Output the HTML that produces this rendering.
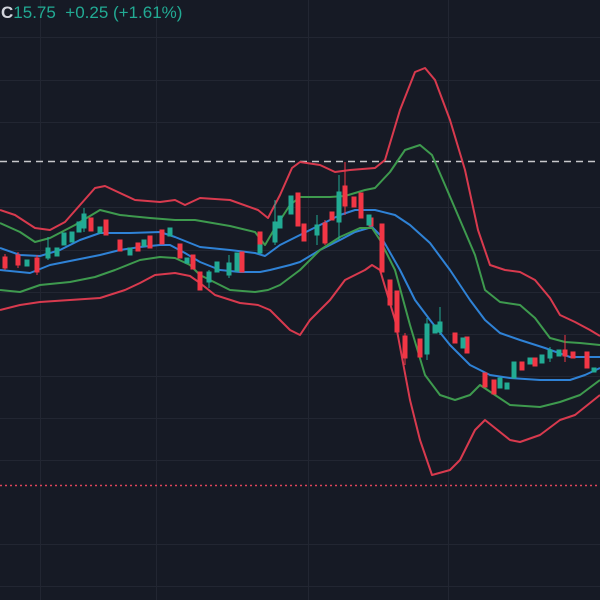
<!DOCTYPE html><html><head><style>html,body{margin:0;padding:0;background:#161a25;width:600px;height:600px;overflow:hidden}
.t{position:absolute;left:1px;top:3px;font:17px "Liberation Sans",sans-serif;color:#22ab94;white-space:pre}
</style></head><body>
<svg width="600" height="600" style="position:absolute;left:0;top:0">
<rect width="600" height="600" fill="#161a25"/>
<g stroke="#222632" stroke-width="1">
<line x1="0" y1="37.5" x2="600" y2="37.5"/><line x1="0" y1="80.5" x2="600" y2="80.5"/><line x1="0" y1="122.5" x2="600" y2="122.5"/><line x1="0" y1="207.5" x2="600" y2="207.5"/><line x1="0" y1="250.5" x2="600" y2="250.5"/><line x1="0" y1="292.5" x2="600" y2="292.5"/><line x1="0" y1="334.5" x2="600" y2="334.5"/><line x1="0" y1="376.5" x2="600" y2="376.5"/><line x1="0" y1="418.5" x2="600" y2="418.5"/><line x1="0" y1="460.5" x2="600" y2="460.5"/><line x1="0" y1="544.5" x2="600" y2="544.5"/><line x1="0" y1="586.5" x2="600" y2="586.5"/>
<line x1="40.5" y1="0" x2="40.5" y2="600"/><line x1="156.5" y1="0" x2="156.5" y2="600"/><line x1="308.5" y1="0" x2="308.5" y2="600"/><line x1="448.5" y1="0" x2="448.5" y2="600"/>
</g>
<line x1="0" y1="161.5" x2="600" y2="161.5" stroke="#c8c8cc" stroke-width="1.5" stroke-dasharray="7,5"/>
<line x1="0" y1="485.5" x2="600" y2="485.5" stroke="#e0455a" stroke-width="1.5" stroke-dasharray="2,3"/>
<g fill="none" stroke-width="2" stroke-linejoin="round">
<polyline stroke="#d83a4e" points="0,210 15,215 35,228 50,230 65,222 95,188 105,186 135,200 160,202 175,200 185,205 200,198 230,200 258,210 268,218 280,195 292,168 300,162 320,165 335,172 350,170 375,168 385,160 400,110 415,72 425,68 435,80 450,120 465,170 478,230 490,265 505,270 520,272 535,280 550,298 560,315 575,322 590,330 600,336"/>
<polyline stroke="#3e9a4e" points="0,223 20,232 35,242 50,238 75,225 100,210 120,215 150,218 175,220 195,220 230,226 255,232 265,245 275,228 290,205 300,197 330,197 345,196 365,190 375,188 390,172 405,150 420,145 432,155 445,185 460,220 475,255 485,290 500,302 520,305 535,318 550,338 565,342 580,343 600,345"/>
<polyline stroke="#2f82d6" points="0,248 20,255 40,256 60,250 80,240 100,233 130,233 160,232 175,237 200,247 230,250 255,253 265,256 280,245 300,235 320,225 340,215 355,210 375,210 395,215 410,225 430,243 450,270 470,300 485,320 500,333 520,340 545,348 570,357 585,357 600,357"/>
<polyline stroke="#2f82d6" points="0,270 20,272 30,273 50,265 75,260 100,255 120,250 140,247 160,245 170,245 185,253 200,262 220,270 240,272 260,272 270,270 290,265 300,262 320,250 340,240 355,232 372,227 380,235 400,270 415,300 430,320 450,345 470,365 490,375 510,378 540,380 570,380 585,375 600,368"/>
<polyline stroke="#3e9a4e" points="0,290 20,292 40,285 70,282 95,277 115,270 140,260 160,257 175,258 190,265 200,275 230,290 255,292 268,290 280,285 300,270 320,250 340,237 360,228 372,228 380,240 395,270 410,325 425,375 440,395 455,400 470,395 480,385 495,395 510,405 540,407 560,402 580,395 600,380"/>
<polyline stroke="#d83a4e" points="0,310 20,305 40,302 70,300 100,298 125,290 140,283 155,275 175,273 190,276 200,283 215,295 240,303 258,305 270,310 290,330 300,335 310,320 330,300 345,280 365,270 372,265 380,270 395,320 410,400 420,440 432,475 450,470 460,460 475,430 485,420 495,428 510,440 520,442 540,435 560,420 575,415 590,403 600,395"/>
</g>
<g stroke-width="1">
<g fill="#f23645" stroke="#f23645">
<line x1="5" y1="254" x2="5" y2="270"/><rect x="3" y="257" width="4" height="11"/>
<line x1="18" y1="252" x2="18" y2="268"/><rect x="16" y="255" width="4" height="10"/>
<rect x="35" y="258" width="4" height="14"/><line x1="37" y1="255" x2="37" y2="275"/>
<rect x="89" y="218" width="4" height="13"/>
<rect x="104" y="220" width="4" height="15"/>
<rect x="118" y="240" width="4" height="11"/>
<rect x="136" y="243" width="4" height="8"/>
<rect x="148" y="236" width="4" height="12"/>
<rect x="160" y="230" width="4" height="14"/>
<rect x="178" y="244" width="4" height="14"/>
<rect x="191" y="255" width="4" height="14"/>
<rect x="198" y="272" width="4" height="18"/>
<rect x="240" y="252" width="4" height="20"/>
<rect x="258" y="232" width="4" height="20"/>
<rect x="296" y="193" width="4" height="33"/>
<rect x="302" y="224" width="4" height="17"/>
<line x1="325" y1="220" x2="325" y2="245"/><rect x="323" y="223" width="4" height="20"/>
<rect x="330" y="212" width="4" height="8"/>
<line x1="345" y1="162" x2="345" y2="215"/><rect x="343" y="186" width="4" height="20"/>
<rect x="352" y="197" width="4" height="10"/>
<rect x="359" y="193" width="4" height="25"/>
<rect x="369" y="218" width="4" height="8"/>
<rect x="380" y="224" width="4" height="48"/>
<rect x="388" y="280" width="4" height="25"/>
<rect x="395" y="291" width="4" height="41"/>
<line x1="405" y1="333" x2="405" y2="365"/><rect x="403" y="336" width="4" height="22"/>
<rect x="418" y="339" width="4" height="18"/>
<rect x="453" y="333" width="4" height="10"/>
<rect x="465" y="337" width="4" height="16"/>
<rect x="483" y="373" width="4" height="14"/>
<rect x="492" y="380" width="4" height="14"/>
<rect x="520" y="362" width="4" height="8"/>
<rect x="533" y="358" width="4" height="8"/>
<line x1="565" y1="335" x2="565" y2="362"/><rect x="563" y="350" width="4" height="6"/>
<rect x="571" y="352" width="4" height="6"/>
<rect x="585" y="352" width="4" height="16"/>
</g>
<g fill="#22ab94" stroke="#22ab94">
<rect x="25" y="260" width="4" height="6"/>
<line x1="48" y1="237" x2="48" y2="260"/><rect x="46" y="248" width="4" height="10"/>
<rect x="55" y="248" width="4" height="8"/>
<rect x="62" y="233" width="4" height="12"/>
<rect x="70" y="232" width="4" height="10"/>
<rect x="77" y="222" width="4" height="10"/>
<line x1="84" y1="208" x2="84" y2="232"/><rect x="82" y="214" width="4" height="14"/>
<rect x="98" y="227" width="4" height="6"/>
<rect x="128" y="248" width="4" height="7"/>
<rect x="142" y="240" width="4" height="6"/>
<rect x="168" y="228" width="4" height="8"/>
<rect x="185" y="258" width="4" height="5"/>
<line x1="209" y1="270" x2="209" y2="288"/><rect x="207" y="272" width="4" height="10"/>
<rect x="215" y="262" width="4" height="10"/>
<line x1="229" y1="255" x2="229" y2="278"/><rect x="227" y="263" width="4" height="12"/>
<rect x="235" y="253" width="4" height="18"/>
<rect x="258" y="245" width="4" height="8"/>
<line x1="275" y1="200" x2="275" y2="245"/><rect x="273" y="222" width="4" height="20"/>
<rect x="278" y="216" width="4" height="12"/>
<rect x="289" y="196" width="4" height="18"/>
<line x1="317" y1="215" x2="317" y2="245"/><rect x="315" y="225" width="4" height="10"/>
<line x1="339" y1="175" x2="339" y2="240"/><rect x="337" y="192" width="4" height="30"/>
<rect x="367" y="215" width="4" height="10"/>
<line x1="427" y1="318" x2="427" y2="360"/><rect x="425" y="324" width="4" height="30"/>
<rect x="433" y="325" width="4" height="8"/>
<line x1="440" y1="307" x2="440" y2="335"/><rect x="438" y="322" width="4" height="10"/>
<rect x="461" y="338" width="4" height="10"/>
<rect x="498" y="378" width="4" height="10"/>
<rect x="505" y="383" width="4" height="6"/>
<rect x="512" y="362" width="4" height="16"/>
<rect x="528" y="358" width="4" height="6"/>
<rect x="540" y="355" width="4" height="8"/>
<line x1="550" y1="347" x2="550" y2="362"/><rect x="548" y="350" width="4" height="8"/>
<rect x="557" y="350" width="4" height="6"/>
<rect x="592" y="368" width="4" height="4"/>
</g>
</g>
</svg>
<div class="t"><span style="color:#d1d4dc;font-weight:bold">C</span>15.75  +0.25 (+1.61%)</div>
</body></html>
